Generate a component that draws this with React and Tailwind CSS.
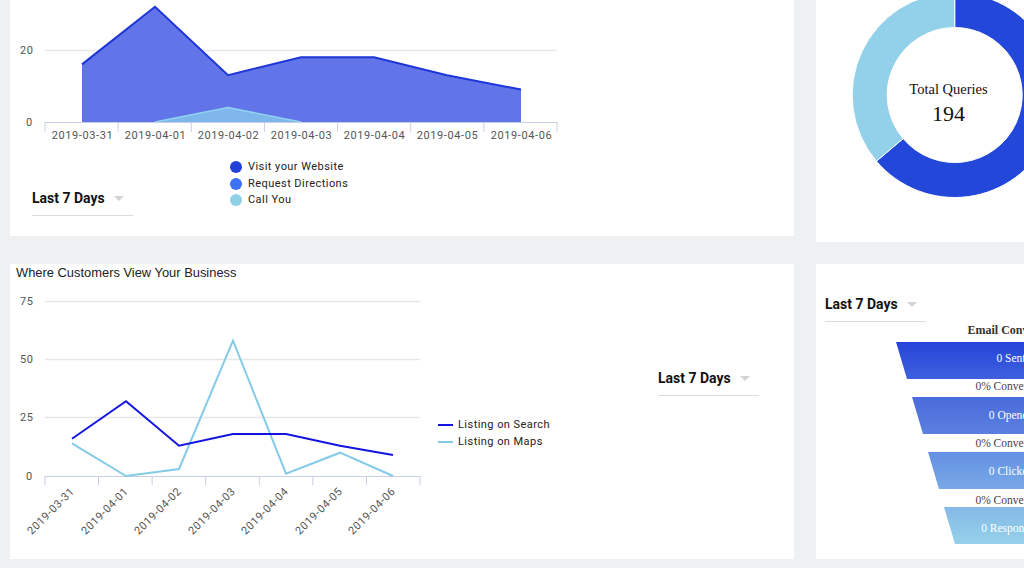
const days = ['2019-03-31','2019-04-01','2019-04-02','2019-04-03','2019-04-04','2019-04-05','2019-04-06'];
const sans = 'Roboto, sans-serif';
const serif = '"Liberation Serif", serif';

function pts(xs, vals, y0, k) {
  return vals.map((v, i) => `${xs[i]},${(y0 - v * k).toFixed(1)}`).join(' ');
}

function LastSeven({ className = '' }) {
  return (
    <div className={`w-[101px] shrink-0 border-b border-[#dcdcdc] pb-[7px] flex items-center justify-between pr-[9px] ${className}`}>
      <span className="font-['Roboto',sans-serif] font-bold text-[14px] leading-[20px] text-[#111]">Last 7 Days</span>
      <span className="w-0 h-0 border-x-[5px] border-t-[5px] border-x-transparent border-t-[#d4d4d4]" />
    </div>
  );
}

function AreaChart() {
  const xs = [82, 155, 228, 301, 374, 447, 521];
  const ticks = xs.map((_, i) => 45 + i * 73.14).concat(557);
  const visit = pts(xs, [16, 32, 13, 18, 18, 13, 9], 122, 3.6);
  const call = pts(xs, [0, 0, 4, 0, 0, 0, 0], 122, 3.6);
  return (
    <svg width="570" height="150" viewBox="10 0 570 150" className="block shrink-0">
      <line x1="45" x2="557" y1="50.5" y2="50.5" stroke="#e6e7ea" strokeWidth="1.4" />
      <polygon points={`82,122 ${visit} 521,122`} fill="#6275e8" />
      <polyline points={visit} fill="none" stroke="#1c36d8" strokeWidth="2" />
      <polygon points={`155,122 ${xs.slice(1).map((x, i) => `${x},${(122 - [0, 4, 0, 0, 0, 0][i] * 3.6).toFixed(1)}`).join(' ')} 521,122`} fill="#7fb6ec" />
      <polyline points={call.split(' ').slice(1, 4).join(' ')} fill="none" stroke="#8fd3ee" strokeWidth="1.5" />
      <line x1="45" x2="557" y1="122.5" y2="122.5" stroke="#c5cfe6" />
      {ticks.map((x) => <line key={x} x1={x} x2={x} y1="122" y2="132" stroke="#c5cfe6" />)}
      <g fontFamily={sans} fontSize="11" fill="#555" letterSpacing="0.6">
        <text x="20" y="54">20</text>
        <text x="26" y="126">0</text>
        {days.map((d, i) => <text key={d} x={xs[i] + 0.5} y="139" textAnchor="middle">{d}</text>)}
      </g>
    </svg>
  );
}

function LineChart() {
  const xs = [72, 126, 179, 233, 286, 340, 393];
  const ticks = xs.map((_, i) => 45 + i * 53.57).concat(420);
  return (
    <svg width="420" height="270" viewBox="10 285 420 270" className="block shrink-0">
      {[301, 359, 417].map((y) => <line key={y} x1="45" x2="420" y1={y + 0.5} y2={y + 0.5} stroke="#e6e7ea" strokeWidth="1.4" />)}
      <line x1="45" x2="420" y1="476.5" y2="476.5" stroke="#c5cfe6" />
      {ticks.map((x) => <line key={x} x1={x} x2={x} y1="476" y2="485" stroke="#c5cfe6" />)}
      <polyline points={pts(xs, [14, 0, 3, 58, 1, 10, 0], 476, 2.333)} fill="none" stroke="#83cbe6" strokeWidth="2" />
      <polyline points={pts(xs, [16, 32, 13, 18, 18, 13, 9], 476, 2.333)} fill="none" stroke="#1414e0" strokeWidth="2" />
      <g fontFamily={sans} fontSize="11" fill="#555" letterSpacing="0.6">
        <text x="20" y="305">75</text>
        <text x="20" y="363">50</text>
        <text x="20" y="421">25</text>
        <text x="26" y="480">0</text>
        {days.map((d, i) => (
          <text key={d} x={xs[i] + 3} y="492" textAnchor="end" letterSpacing="0.55" transform={`rotate(-45 ${xs[i] + 3} 492)`}>{d}</text>
        ))}
      </g>
    </svg>
  );
}

function Donut() {
  const cx = 954.7, cy = 95, R = 102.5, r = 67.5;
  const p = (rad, deg) => {
    const a = (deg * Math.PI) / 180;
    return `${(cx + rad * Math.sin(a)).toFixed(2)} ${(cy - rad * Math.cos(a)).toFixed(2)}`;
  };
  const seg = (from, to) => {
    const large = to - from > 180 ? 1 : 0;
    return `M${p(R, from)} A${R} ${R} 0 ${large} 1 ${p(R, to)} L${p(r, to)} A${r} ${r} 0 ${large} 0 ${p(r, from)} Z`;
  };
  return (
    <svg width="208" height="200" viewBox="816 0 208 200" className="block">
      <path d={seg(0, 229.8)} fill="#2347d8" stroke="#fff" strokeWidth="1" />
      <path d={seg(229.8, 360)} fill="#93d1ea" stroke="#fff" strokeWidth="1" />
      <text x="948.5" y="94" textAnchor="middle" fontFamily={serif} fontSize="14.5" fill="#111">Total Queries</text>
      <text x="948.5" y="121" textAnchor="middle" fontFamily={serif} fontSize="22" fill="#111">194</text>
    </svg>
  );
}

const stages = [
  { t: '0 Sent', cls: 'w-[236px] pb-[4px] bg-gradient-to-b from-[#2543da] to-[#3f60dc]', note: 'leading-[15px]' },
  { t: '0 Opened', cls: 'w-[204px] bg-gradient-to-b from-[#4a6bdc] to-[#5b80e0]', note: 'leading-[19px]' },
  { t: '0 Clicked', cls: 'w-[172px] pt-[3px] bg-gradient-to-b from-[#6491e4] to-[#78a8e6]', note: 'leading-[22px]' },
  { t: '0 Responded', cls: 'w-[140px] pt-[7px] bg-gradient-to-b from-[#85b9e7] to-[#95d1ea]', note: '' },
];

function Funnel() {
  return (
    <div className="ml-[80px] w-[236px] shrink-0 flex flex-col items-center font-['Liberation_Serif',serif] text-[11.5px]">
      <div className="h-[20px] leading-[16px] pl-[4px] text-[12px] font-bold text-[#333] whitespace-nowrap">Email Conversions</div>
      {stages.map((s) => (
        <div key={s.t} className="flex flex-col items-center w-full">
          <div className={`h-[37px] pr-[6px] flex items-center justify-center text-white [clip-path:polygon(0_0,100%_0,calc(100%-11px)_100%,11px_100%)] ${s.cls}`}>{s.t}</div>
          {s.note && <div className={`h-[18px] pr-[6px] text-[#444] whitespace-nowrap ${s.note}`}>0% Conversion</div>}
        </div>
      ))}
    </div>
  );
}

function Dot({ color, label }) {
  return (
    <div className="flex items-center gap-[6px] h-[16.5px]">
      <span className={`w-[12px] h-[12px] rounded-full ${color}`} />
      <span>{label}</span>
    </div>
  );
}

function Dash({ color, label }) {
  return (
    <div className="flex items-center gap-[5px] h-[16.5px]">
      <span className={`w-[15px] h-[2px] ${color}`} />
      <span>{label}</span>
    </div>
  );
}

export default function App() {
  const legend = "font-['Roboto',sans-serif] text-[11px] tracking-[0.45px] text-[#222] whitespace-nowrap";
  return (
    <div className="w-[1024px] h-[568px] overflow-hidden bg-[#eff0f2] flex gap-[22px] pl-[10px]">
      <div className="w-[784px] shrink-0 flex flex-col gap-[28px]">
        <section className="h-[236px] bg-white flex flex-col">
          <AreaChart />
          <div className="flex items-start pl-[22px] pt-[9px]">
            <LastSeven className="mt-[29px]" />
            <div className={`ml-[97px] ${legend}`}>
              <Dot color="bg-[#2340d8]" label="Visit your Website" />
              <Dot color="bg-[#3b72f6]" label="Request Directions" />
              <Dot color="bg-[#8fd0e8]" label="Call You" />
            </div>
          </div>
        </section>
        <section className="h-[295px] bg-white flex flex-col">
          <h2 className="pl-[6px] pt-[1px] h-[21px] font-['Liberation_Sans',sans-serif] text-[12.9px] leading-[16px] text-[#222]">Where Customers View Your Business</h2>
          <div className="flex items-start">
            <LineChart />
            <div className={`ml-[8px] mt-[132px] w-[120px] ${legend}`}>
              <Dash color="bg-[#1414e0]" label="Listing on Search" />
              <Dash color="bg-[#83cbe6]" label="Listing on Maps" />
            </div>
            <LastSeven className="ml-[100px] mt-[83px]" />
          </div>
        </section>
      </div>
      <div className="w-[208px] shrink-0 flex flex-col gap-[22px]">
        <section className="h-[242px] bg-white overflow-hidden">
          <Donut />
        </section>
        <section className="h-[295px] bg-white overflow-hidden">
          <div className="pl-[9px] pt-[30px]">
            <LastSeven />
          </div>
          <Funnel />
        </section>
      </div>
    </div>
  );
}
